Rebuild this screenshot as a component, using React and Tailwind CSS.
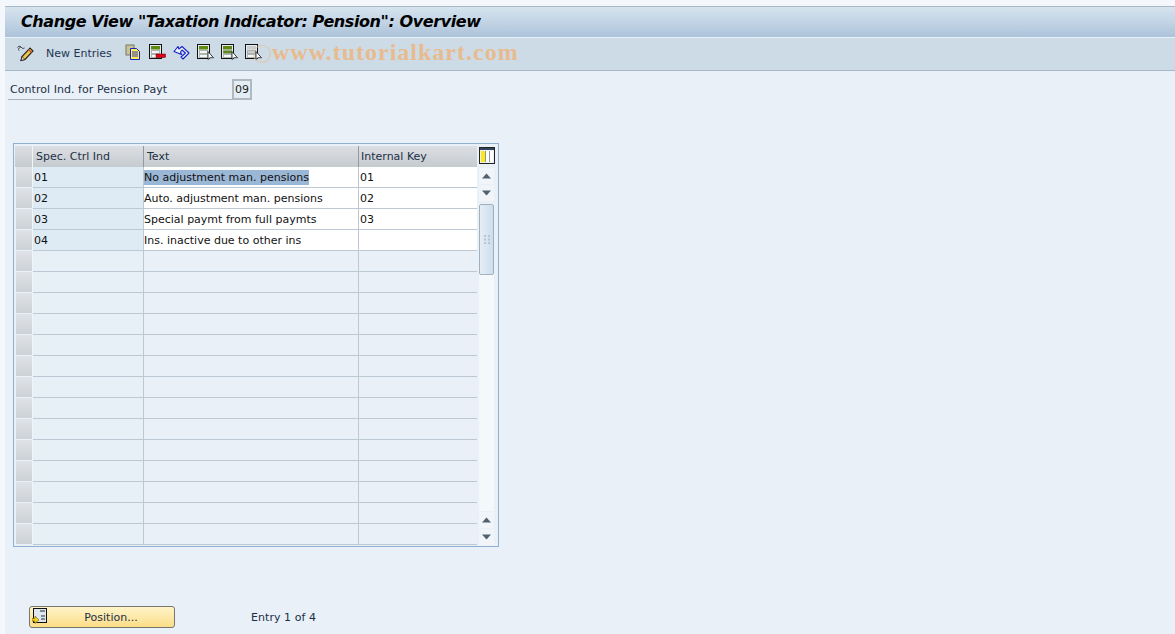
// App.jsx
const ROWS = [
  { ind: '01', text: 'No adjustment man. pensions', key: '01', selected: true },
  { ind: '02', text: 'Auto. adjustment man. pensions', key: '02' },
  { ind: '03', text: 'Special paymt from full paymts', key: '03' },
  { ind: '04', text: 'Ins. inactive due to other ins', key: '' },
  ...Array.from({ length: 14 }, () => ({ ind: '', text: '', key: '' })),
]

function DocIcon({ top = '#5f8a12', mid = '#f4f6f8', bottom = '#f4f6f8', arrow = true, del = false }) {
  return (
    <svg width="17" height="17" viewBox="0 0 17 17" className="shrink-0">
      <rect x="0.500" y="0.500" width="12" height="14" fill="#e8edf2" stroke="#111" />
      <rect x="2" y="2" width="9" height="3.500" fill={top} />
      <rect x="2.250" y="6.750" width="8.500" height="2.500" fill={mid} stroke="#6d7d72" strokeWidth="0.500" />
      <rect x="2.250" y="10.750" width="8.500" height="2.500" fill={bottom} stroke="#6d7d72" strokeWidth="0.500" />
      {arrow && <path d="M11 7.500v8l2-1.800 3.500.1z" fill="#fff" stroke="#111" strokeWidth="0.800" />}
      {del && <rect x="7" y="10" width="9.500" height="3.500" fill="#e0001b" stroke="#600" strokeWidth="0.500" />}
    </svg>
  )
}

function Toolbar() {
  return (
    <div className="relative h-[33px] flex items-center bg-[#cddbe7] border-b border-[#a9b8c8] mt-px">
      <svg width="17" height="17" viewBox="0 0 17 17" className="ml-[12px] mt-[-2px]">
        <path d="M4 15.500l1-4L13 3l3 3-8 8.500z" fill="#f3c24a" stroke="#222" strokeWidth="1.100" />
        <path d="M4 15.500l1-4 3 3z" fill="#f7e3c0" stroke="#222" strokeWidth="0.800" />
        <path d="M0.500 2.500c1-1.500 2.500-1.500 3.500-0.500s2 2 3.500 1M2 5.500c-1-1.500 0-3 1.500-3" fill="none" stroke="#333" strokeWidth="1" />
        <path d="M11.500 4.500l3 3" stroke="#d05a30" strokeWidth="1.500" />
      </svg>
      <span className="ml-[12px] w-[79px] text-[11px] text-[#1f3550]">New Entries</span>
      <div className="flex items-center gap-[7px] mt-[-3px]">
        <svg width="17" height="17" viewBox="0 0 17 17">
          <rect x="1" y="1" width="8" height="10" fill="#c9c39a" stroke="#77786a" />
          <path d="M5.500 4.500h6l3 3v8h-9z" fill="#ffec4d" stroke="#1522c4" />
          <path d="M7 8h6M7 10h6M7 12h6" stroke="#1522c4" strokeWidth="0.900" />
        </svg>
        <DocIcon arrow={false} del />
        <svg width="17" height="17" viewBox="0 0 17 17">
          <path d="M1 7.500L5 2.500 6 5l3-2.500L16 9l-6 6-2-2 4.500-4L9 6 7.500 8l1 2.500z" fill="#eef3f8" stroke="#1522c4" strokeWidth="1.100" strokeLinejoin="round" />
        </svg>
        <DocIcon />
        <DocIcon top="#5f8a12" mid="#5f8a12" />
        <DocIcon top="#c8ced4" mid="#c8ced4" />
      </div>
      <svg width="20" height="20" viewBox="0 0 20 20" className="absolute left-[248px] top-[6px]">
        <circle cx="9" cy="10" r="8.500" fill="none" stroke="#e8bd91" strokeWidth="1.200" opacity="0.6" />
      </svg>
      <span className="absolute left-[267px] top-[-4px] font-['Liberation_Serif',serif] font-bold text-[24px] tracking-[1px] text-[#e8bb8f]">
        www.tutorialkart.com
      </span>
    </div>
  )
}

function ScrollBtn({ up }) {
  return (
    <div className="h-[16px] w-[15px] bg-[#f1f5f9] flex items-center justify-center mb-px">
      <svg width="9" height="6" viewBox="0 0 9 6">
        <path d={up ? 'M4.500 0.500L9 5.500H0z' : 'M0 0.500h9L4.500 5.500z'} fill="#50606f" />
      </svg>
    </div>
  )
}

function Table() {
  return (
    <div className="w-[486px] h-[404px] mt-[43px] ml-[8px] border border-[#8fb0d2] pt-[2px] pl-[1px] flex">
      <div className="w-[463px]">
        {/* header */}
        <div className="flex h-[21px] text-[11px] text-[#1c2f45] bg-gradient-to-b from-[#dcdfe3] to-[#c6cbd0]">
          <div className="w-[18px] border-r border-[#f2f5f8]" />
          <div className="w-[111px] pl-[3px] leading-[21px] border-r border-[#8e99a5]">Spec. Ctrl Ind</div>
          <div className="w-[215px] pl-[3px] leading-[21px] border-r border-[#8e99a5]">Text</div>
          <div className="flex-1 pl-[2px] leading-[21px]">Internal Key</div>
        </div>
        {ROWS.map((r, i) => (
          <div key={i} className="flex h-[21px] text-[11px] text-[#111]">
            <div className="w-[17px] ml-px mb-px bg-gradient-to-b from-[#dfe2e6] to-[#cdd2d7] border-r border-[#f2f5f8]" />
            <div className={`w-[111px] pl-px pt-px leading-[20px] border-b border-r border-[#bcc8d4] ${r.ind ? 'bg-[#deeaf4]' : 'bg-[#e8f0f7]'}`}>{r.ind}</div>
            <div className={`w-[215px] border-b border-r border-[#bcc8d4] ${r.ind ? 'bg-white' : ''}`}>
              <span className={`block leading-[14px] mt-[3px] pt-px w-fit ${r.selected ? 'bg-[#9bb7d6]' : ''}`}>{r.text}</span>
            </div>
            <div className={`flex-1 pl-px pt-px leading-[20px] border-b border-[#bcc8d4] ${r.ind ? 'bg-white' : ''}`}>{r.key}</div>
          </div>
        ))}
      </div>
      <div className="w-[21px] pl-[2px] pr-[4px] flex flex-col items-center">
        <div className="h-[21px] flex items-start">
          <svg width="16" height="17" viewBox="0 0 16 17" className="mt-px">
            <rect x="0.500" y="0.500" width="15" height="16" fill="#eef1f4" stroke="#222" />
            <rect x="1" y="1" width="14" height="2" fill="#34435a" />
            <rect x="2" y="4" width="4" height="11" fill="#ffe81a" />
            <rect x="7" y="4" width="3" height="11" fill="#fff" />
            <rect x="11" y="4" width="3" height="11" fill="#fff" />
            <path d="M6.500 4v11M10.500 4v11" stroke="#8c98a6" />
          </svg>
        </div>
        <div className="mt-[1px]"><ScrollBtn up /></div>
        <ScrollBtn />
        <div className="w-[15px] flex-1 bg-[#f5f8fb] mt-[2px] mb-px">
          <div className="relative h-[71px] bg-gradient-to-r from-[#e6eef5] to-[#cddded] border border-[#9fb0c0] rounded-[2px] flex items-center justify-center">
            <svg width="6" height="9" viewBox="0 0 6 9">
              <path d="M0 0h2v2H0zM4 0h2v2H4zM0 3.500h2v2H0zM4 3.500h2v2H4zM0 7h2v2H0zM4 7h2v2H4z" fill="#b4c4d2" />
            </svg>
          </div>
        </div>
        <ScrollBtn up />
        <ScrollBtn />
      </div>
    </div>
  )
}

export default function App() {
  return (
    <div className="h-[634px] w-[1175px] overflow-hidden bg-[#f4f7fb] pt-[6px] pl-[5px] font-['DejaVu_Sans',sans-serif]">
      <div className="h-[628px] flex flex-col bg-[#e9f0f7]">
        <div className="h-[31px] flex items-center pl-[16px] border-t border-[#a9b8c8] bg-gradient-to-b from-[#d7e4ef] to-[#adc3da]">
          <h1 className="font-['DejaVu_Sans',sans-serif] font-bold italic text-[16px] text-black tracking-[-0.42px]">
            Change View "Taxation Indicator: Pension": Overview
          </h1>
        </div>
        <Toolbar />

        <div className="flex mt-[8px] ml-[3px] h-[21px]">
          <div className="w-[224px] border-b border-[#a8b2bd] pl-[2px] text-[11px] tracking-[0.05px] leading-[21px] text-[#1c2f45]">
            Control Ind. for Pension Payt
          </div>
          <div className="w-[20px] border-2 border-[#b0b8c2] bg-[#e4ecf4] text-center text-[11px] leading-[17px] text-[#222]">09</div>
        </div>

        <Table />

        <div className="flex items-center mt-[59px] ml-[24px]">
          <button className="relative w-[146px] h-[22px] pl-[18px] pt-[3px] rounded-[3px] border border-[#77776f] bg-gradient-to-b from-[#fff4c8] to-[#fbdd86] text-[11px] text-[#1c2f45]">
            <svg width="15" height="16" viewBox="0 0 15 16" className="absolute left-[2px] top-[1px]">
              <rect x="1.500" y="0.500" width="13" height="14" fill="#dfe6ee" stroke="#111" />
              <path d="M8 3h5M9 8h4M9 11h4" stroke="#5a6b7c" strokeWidth="1.500" />
              <path d="M0 10.500h3v-2.500l4 4-4 3.500v-2.500H0z" fill="#f7d21a" stroke="#7a5c00" strokeWidth="0.600" />
            </svg>
            Position...
          </button>
          <span className="ml-[76px] pt-[2px] text-[11px] tracking-[0.05px] text-[#1c2f45]">Entry 1 of 4</span>
        </div>
      </div>
    </div>
  )
}
